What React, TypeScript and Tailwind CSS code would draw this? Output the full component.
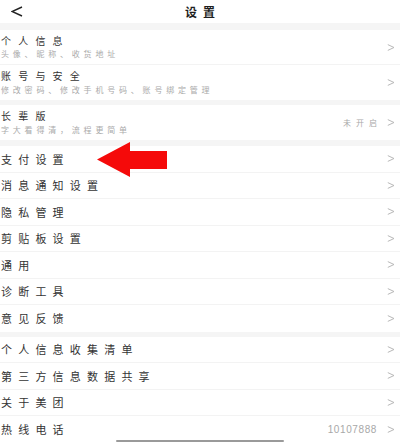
import React from 'react';

const font = { fontFamily: '"Noto Sans CJK SC", "Noto Sans", sans-serif' };

function Chevron() {
  return (
    <svg width="8" height="7" viewBox="0 0 8 7" className="shrink-0">
      <polyline points="0.8,0.6 7,3.5 0.8,6.4" fill="none" stroke="#b8b8b8" strokeWidth="1" />
    </svg>
  );
}

function Band({ h }: { h: string }) {
  return <div className={`${h} bg-[#f5f5f5]`} />;
}

interface RowProps {
  title: string;
  sub?: string;
  value?: string;
  mono?: boolean;
  last?: boolean;
}

function Row({ title, sub, value, mono, last }: RowProps) {
  return (
    <div
      className={`flex items-center pl-[1px] pr-[5px] bg-white ${sub ? 'h-[35px]' : 'h-[26.5px]'} ${last ? '' : 'border-b border-[#f3f3f3]'}`}
    >
      <div className="flex-1 flex flex-col justify-center min-w-0">
        <div
          className={`${sub ? 'text-[10px] tracking-[7.2px]' : 'text-[11px] tracking-[6.2px]'} leading-[14px] text-[#333] whitespace-nowrap`}
        >
          {title}
        </div>
        {sub && (
          <div className="text-[8px] leading-[12px] tracking-[3.8px] text-[#aaa] whitespace-nowrap mt-[0.5px]">{sub}</div>
        )}
      </div>
      {value && (
        <span
          className={
            mono
              ? 'text-[10px] tracking-[0.6px] text-[#a8a8a8] mr-[10px] font-["Liberation_Sans"]'
              : 'text-[8px] tracking-[5px] text-[#a8a8a8] mr-[5px]'
          }
        >
          {value}
        </span>
      )}
      <Chevron />
    </div>
  );
}

export default function App() {
  return (
    <div className="relative w-[400px] h-[446px] overflow-hidden bg-white" style={font}>
      <header className="relative h-[23px] flex items-center justify-center bg-white">
        <svg width="12" height="11" viewBox="0 0 12 11" className="absolute left-[11px] top-[6px]">
          <polyline points="11,1 1,5.5 11,10" fill="none" stroke="#222" strokeWidth="1.4" />
        </svg>
        <h1 className="text-[12px] font-semibold tracking-[6px] pl-[6px] text-[#1f1f1f]">设置</h1>
      </header>

      <Band h="h-[7px]" />
      <Row title="个人信息" sub="头像、昵称、收货地址" />
      <Row title="账号与安全" sub="修改密码、修改手机号码、账号绑定管理" last />

      <Band h="h-[5px]" />
      <Row title="长辈版" sub="字大看得清，流程更简单" value="未开启" last />

      <Band h="h-[6px]" />
      <Row title="支付设置" />
      <Row title="消息通知设置" />
      <Row title="隐私管理" />
      <Row title="剪贴板设置" />
      <Row title="通用" />
      <Row title="诊断工具" />
      <Row title="意见反馈" last />

      <Band h="h-[5px]" />
      <Row title="个人信息收集清单" />
      <Row title="第三方信息数据共享" />
      <Row title="关于美团" />
      <Row title="热线电话" value="10107888" mono last />

      {/* red pointer arrow */}
      <svg width="70" height="36" viewBox="0 0 70 36" className="absolute left-[97px] top-[142px]">
        <polygon points="0,17.5 33,0 33,9 70,9 70,27 33,27 33,35" fill="#f50a0a" />
      </svg>

      {/* home indicator */}
      <div className="absolute left-[116px] top-[440px] w-[168px] h-[2px] rounded-full bg-[#9a9a9a]" />
    </div>
  );
}
